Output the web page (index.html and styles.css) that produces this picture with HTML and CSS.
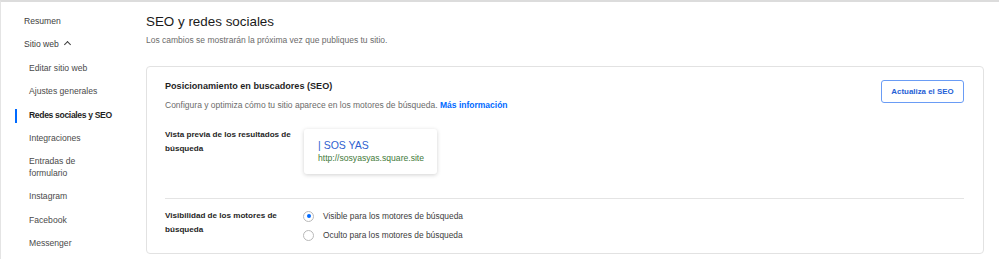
FILE: index.html
```html
<!DOCTYPE html>
<html lang="es">

<head>
    <meta charset="UTF-8">
    <title>SEO y redes sociales</title>
    <link rel="stylesheet" href="styles.css">
</head>

<body>
    <div id="page">
        <nav id="sidebar">
            <a class="nav-item">Resumen</a>
            <a class="nav-item">Sitio web <span class="caret"></span></a>
            <a class="nav-item sub">Editar sitio web</a>
            <a class="nav-item sub">Ajustes generales</a>
            <a class="nav-item sub active">Redes sociales y SEO</a>
            <a class="nav-item sub">Integraciones</a>
            <a class="nav-item sub">Entradas de<br>formulario</a>
            <a class="nav-item sub">Instagram</a>
            <a class="nav-item sub">Facebook</a>
            <a class="nav-item sub">Messenger</a>
        </nav>

        <main id="content">
            <h1>SEO y redes sociales</h1>
            <p class="subtitle">Los cambios se mostrarán la próxima vez que publiques tu sitio.</p>

            <section class="card">
                <div class="card-head">
                    <div>
                        <h2>Posicionamiento en buscadores (SEO)</h2>
                        <p class="desc">Configura y optimiza cómo tu sitio aparece en los motores de búsqueda. <a class="link">Más información</a></p>
                    </div>
                    <button class="outline">Actualiza el SEO</button>
                </div>

                <div class="row preview-row">
                    <div class="label">Vista previa de los resultados de búsqueda</div>
                    <div class="preview">
                        <div class="preview-title">| SOS YAS</div>
                        <div class="preview-url">http://sosyasyas.square.site</div>
                    </div>
                </div>

                <div class="row visibility-row">
                    <div class="label">Visibilidad de los motores de búsqueda</div>
                    <div class="options">
                        <label class="option"><span class="radio checked"></span>Visible para los motores de búsqueda</label>
                        <label class="option"><span class="radio"></span>Oculto para los motores de búsqueda</label>
                    </div>
                </div>
            </section>
        </main>
    </div>
</body>

</html>
```

FILE: styles.css
```css
body {
    margin: 0;
    font-family: "Liberation Sans", Arial, sans-serif;
    color: #1f1f1f;
    background: #ffffff;
}

#page {
    display: flex;
    height: 259px;
    box-sizing: border-box;
    border-top: 2px solid #dcdcdc;
    border-left: 1px solid #e4e4e4;
    overflow: hidden;
}

#sidebar {
    width: 145px;
    flex-shrink: 0;
    padding-top: 8px;
    display: flex;
    flex-direction: column;
}

.nav-item {
    position: relative;
    display: block;
    padding: 6px 0 6px 23px;
    font-size: 8.6px;
    line-height: 11.4px;
    color: #3d3d3d;
}

.nav-item.sub {
    padding-left: 28px;
    color: #4a4a4a;
}

.nav-item.active {
    font-weight: bold;
    color: #1f1f1f;
    letter-spacing: -0.35px;
}

.nav-item.active::before {
    content: "";
    position: absolute;
    left: 14px;
    top: 5px;
    width: 2px;
    height: 14px;
    background: #006aff;
}

.caret {
    display: inline-block;
    width: 4px;
    height: 4px;
    margin-left: 4px;
    border-left: 1px solid #3d3d3d;
    border-top: 1px solid #3d3d3d;
    transform: rotate(45deg);
    vertical-align: 0;
}

#content {
    flex: 1;
    padding-right: 15px;
}

h1 {
    margin: 11px 0 0 0;
    font-size: 13.4px;
    line-height: 18px;
    font-weight: normal;
    color: #1a1a1a;
}

.subtitle {
    margin: 3px 0 0 0;
    font-size: 8.5px;
    line-height: 12px;
    color: #6b6b6b;
}

.card {
    margin-top: 20px;
    border: 1px solid #e2e2e2;
    border-radius: 4px;
    padding: 0 19px 0 18px;
    height: 188px;
    box-sizing: border-box;
}

.card-head {
    display: flex;
    justify-content: space-between;
    align-items: flex-start;
}

h2 {
    margin: 13px 0 0 0;
    font-size: 9.1px;
    line-height: 13px;
    font-weight: bold;
    color: #1f1f1f;
}

.desc {
    margin: 6px 0 0 0;
    font-size: 8.5px;
    line-height: 12px;
    color: #6b6b6b;
}

.link {
    color: #006aff;
    font-weight: bold;
}

button.outline {
    margin-top: 13px;
    width: 83px;
    height: 23px;
    background: #ffffff;
    border: 1px solid #6a9cf5;
    border-radius: 3px;
    color: #1f5fd6;
    font-family: inherit;
    font-size: 7.9px;
    font-weight: bold;
    padding: 0;
}

.row {
    display: flex;
    align-items: flex-start;
}

.label {
    width: 139px;
    flex-shrink: 0;
    font-size: 8.1px;
    line-height: 14px;
    font-weight: bold;
    color: #1f1f1f;
}

.preview-row {
    margin-top: 18px;
    padding-bottom: 24px;
    border-bottom: 1px solid #e4e4e4;
}

.preview-row .label {
    margin-top: -1px;
}

.preview {
    width: 133px;
    height: 45px;
    box-sizing: border-box;
    padding: 9px 14px 0 14px;
    border-radius: 3px;
    background: #ffffff;
    box-shadow: 0 1px 4px rgba(0, 0, 0, 0.18);
}

.preview-title {
    font-size: 10.5px;
    line-height: 14px;
    color: #2f5fcf;
}

.preview-url {
    font-size: 8.6px;
    line-height: 12px;
    color: #3f7a3a;
}

.visibility-row {
    margin-top: 10px;
}

.options {
    display: flex;
    flex-direction: column;
    gap: 5px;
}

.option {
    display: flex;
    align-items: center;
    font-size: 8.4px;
    line-height: 14px;
    color: #3d3d3d;
}

.radio {
    width: 11px;
    height: 11px;
    box-sizing: border-box;
    border: 1px solid #b9b9b9;
    border-radius: 50%;
    margin-right: 9px;
    margin-left: -1px;
    position: relative;
}

.radio.checked::after {
    content: "";
    position: absolute;
    left: 2.5px;
    top: 2.5px;
    width: 4px;
    height: 4px;
    border-radius: 50%;
    background: #006aff;
}
```
